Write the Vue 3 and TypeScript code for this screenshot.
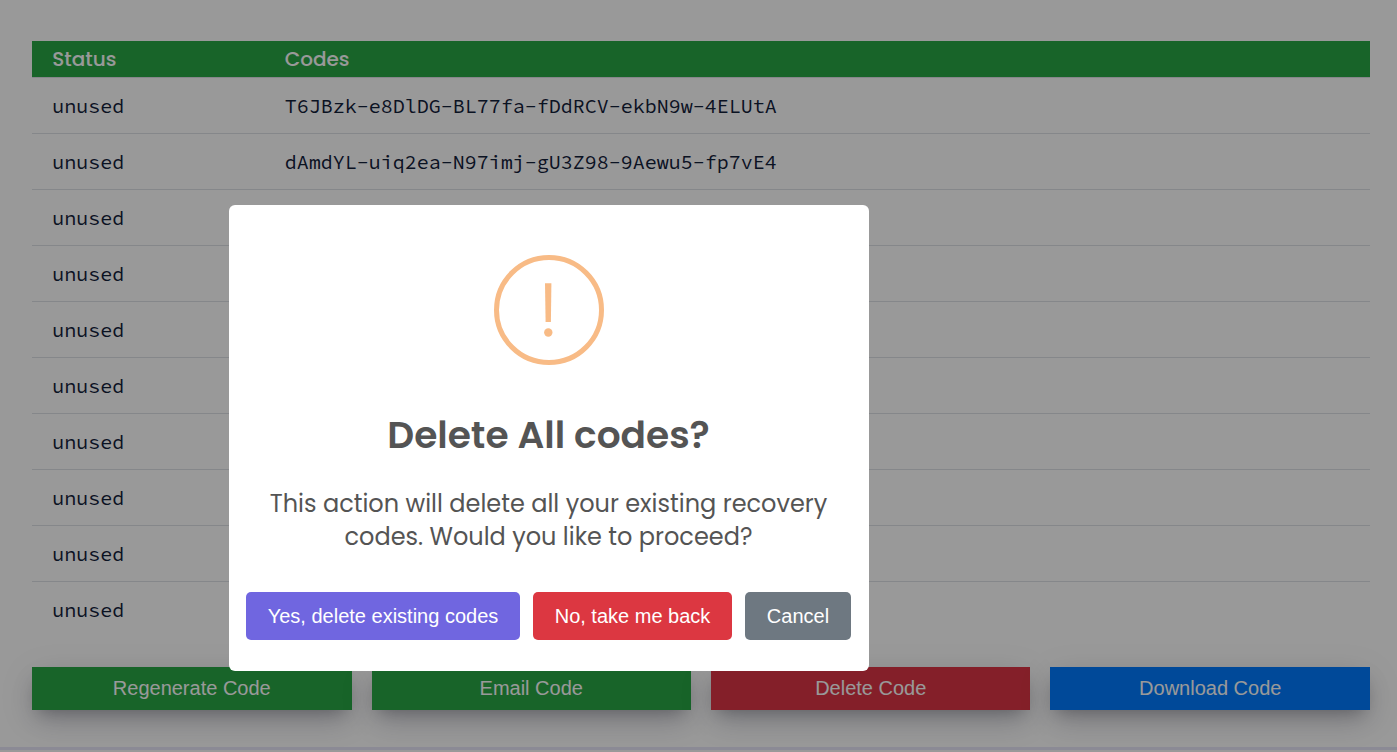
<script setup lang="ts">
interface RecoveryCode {
  status: string
  code: string
}

const codes: RecoveryCode[] = [
  { status: 'unused', code: 'T6JBzk-e8DlDG-BL77fa-fDdRCV-ekbN9w-4ELUtA' },
  { status: 'unused', code: 'dAmdYL-uiq2ea-N97imj-gU3Z98-9Aewu5-fp7vE4' },
  ...Array.from({ length: 8 }, () => ({ status: 'unused', code: '' })),
]

const actions = [
  { label: 'Regenerate Code', tone: 'green' },
  { label: 'Email Code', tone: 'green' },
  { label: 'Delete Code', tone: 'red' },
  { label: 'Download Code', tone: 'blue' },
]
</script>

<template>
  <div class="page">
    <main class="content">
      <div class="table">
        <div class="row head"><span>Status</span><span>Codes</span></div>
        <div v-for="(item, i) in codes" :key="i" class="row">
          <span>{{ item.status }}</span><span>{{ item.code }}</span>
        </div>
      </div>
      <div class="actions">
        <button v-for="a in actions" :key="a.label" class="action" :class="a.tone">{{ a.label }}</button>
      </div>
    </main>
    <div class="divider"></div>

    <div class="overlay">
      <div class="modal" role="dialog">
        <svg class="warning" viewBox="0 0 110 110">
          <circle cx="55" cy="55" r="52.5" fill="none" stroke="#f8bb86" stroke-width="5" />
          <path d="M51 28.3h6.4l-.5 38.7h-5.3z" fill="#f8bb86" />
          <circle cx="54.3" cy="77.5" r="4.2" fill="#f8bb86" />
        </svg>
        <h2 class="title">Delete All codes?</h2>
        <p class="message">
          This action will delete all your existing recovery<br />
          codes. Would you like to proceed?
        </p>
        <div class="choices">
          <button class="choice confirm">Yes, delete existing codes</button>
          <button class="choice deny">No, take me back</button>
          <button class="choice cancel">Cancel</button>
        </div>
      </div>
    </div>
  </div>
</template>

<style>
body {
  margin: 0;
  overflow: hidden;
}
</style>

<style scoped>
.page {
  position: relative;
  display: flex;
  flex-direction: column;
  box-sizing: border-box;
  height: 752px;
  padding-top: 41px;
  background: #fff;
  overflow: hidden;
}
.content {
  height: 706px;
  flex: none;
  padding: 0 27.03px 0 32.03px;
}
.row {
  display: grid;
  grid-template-columns: 232.5px 1fr;
  box-sizing: border-box;
  height: 56px;
  padding: 1px 20.2px 0;
  align-items: center;
  border-bottom: 1px solid #dee2e6;
  color: #12203a;
  font: 420 20px/28px "Source Code Pro", "Liberation Mono", monospace;
  white-space: pre;
}
.row:last-child {
  border-bottom-color: transparent;
}
.row.head {
  height: 37px;
  padding-top: 1px;
  background: #28a745;
  background-clip: padding-box;
  color: #fff;
  font: 500 20px/35px Poppins, Inter, sans-serif;
}
.actions {
  display: grid;
  grid-template-columns: repeat(4, 1fr);
  gap: 20px;
  margin-top: 29px;
}
.action {
  height: 43px;
  padding: 0;
  border: 0;
  color: #fff;
  font: 20px/43px "Liberation Sans", Arial, sans-serif;
  box-shadow:
    rgba(50, 50, 93, 0.22) 0 13px 27px -5px,
    rgba(0, 0, 0, 0.25) 0 8px 16px -8px,
    rgba(0, 0, 0, 0.1) 0 8px 36px;
}
.green {
  background: #28a745;
}
.red {
  background: #dc3545;
}
.blue {
  background: #007bff;
}
.divider {
  position: relative;
  flex: none;
  height: 3px;
  background: #e8e6f8;
}
.overlay {
  position: absolute;
  inset: 0;
  background: rgba(0, 0, 0, 0.4);
}
.modal {
  display: flex;
  flex-direction: column;
  align-items: center;
  box-sizing: border-box;
  width: 640px;
  height: 466px;
  margin: 205px 0 0 229px;
  padding-top: 50px;
  border-radius: 6px;
  background: #fff;
  color: #545454;
  font-family: Poppins, Inter, sans-serif;
}
.warning {
  flex: none;
  width: 110px;
  height: 110px;
}
.title {
  margin: 42px 1px 0 0;
  font-size: 37.5px;
  font-weight: 600;
  line-height: 56px;
  white-space: nowrap;
}
.message {
  margin: 24px 1px 0 0;
  font-size: 24px;
  line-height: 33px;
  text-align: center;
  white-space: nowrap;
}
.choices {
  display: flex;
  gap: 13px;
  margin: 39px 1px 0 0;
}
.choice {
  height: 48px;
  padding: 0;
  border: 0;
  border-radius: 5px;
  color: #fff;
  font: 20px/48px "Liberation Sans", Arial, sans-serif;
}
.confirm {
  width: 274px;
  background: #7066e0;
}
.deny {
  width: 199px;
  background: #dc3741;
}
.cancel {
  width: 106px;
  background: #6e7881;
}
</style>
